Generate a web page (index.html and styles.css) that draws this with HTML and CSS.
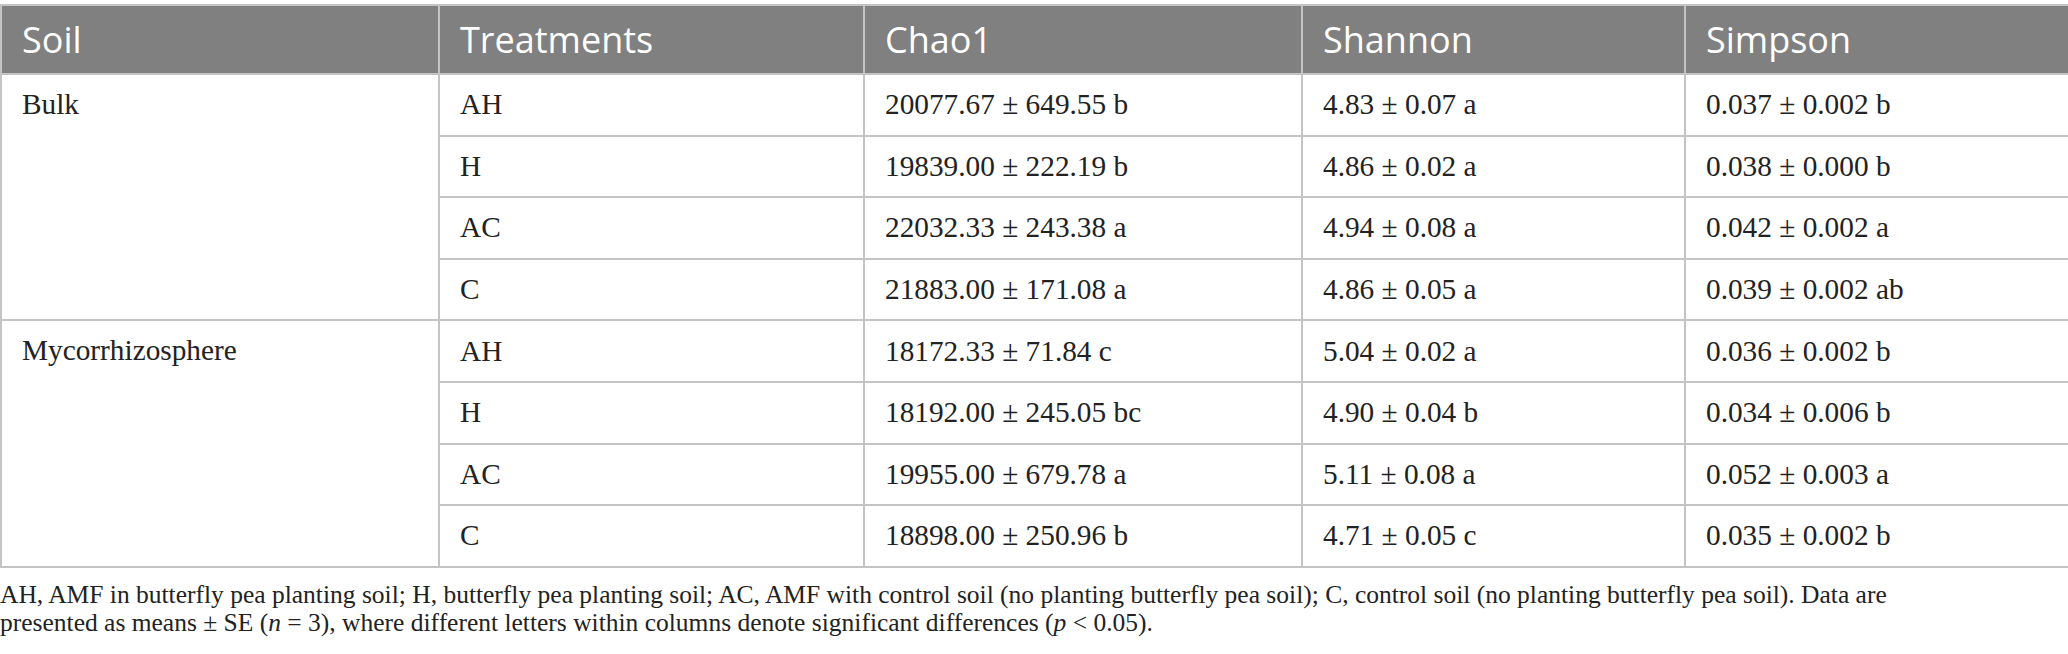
FILE: index.html
```html
<!DOCTYPE html>
<html lang="en">
<head>
    <meta charset="UTF-8">
    <title>Alpha diversity</title>
    <link rel="stylesheet" href="styles.css">
</head>
<body>
    <div class="wrap">
        <table class="data-table">
            <colgroup>
                <col class="c-soil">
                <col class="c-treat">
                <col class="c-chao">
                <col class="c-shannon">
                <col class="c-simpson">
            </colgroup>
            <thead>
                <tr>
                    <th>Soil</th>
                    <th>Treatments</th>
                    <th>Chao1</th>
                    <th>Shannon</th>
                    <th>Simpson</th>
                </tr>
            </thead>
            <tbody>
                <tr>
                    <td rowspan="4" class="group">Bulk</td>
                    <td>AH</td>
                    <td>20077.67 ± 649.55 b</td>
                    <td>4.83 ± 0.07 a</td>
                    <td>0.037 ± 0.002 b</td>
                </tr>
                <tr>
                    <td>H</td>
                    <td>19839.00 ± 222.19 b</td>
                    <td>4.86 ± 0.02 a</td>
                    <td>0.038 ± 0.000 b</td>
                </tr>
                <tr>
                    <td>AC</td>
                    <td>22032.33 ± 243.38 a</td>
                    <td>4.94 ± 0.08 a</td>
                    <td>0.042 ± 0.002 a</td>
                </tr>
                <tr>
                    <td>C</td>
                    <td>21883.00 ± 171.08 a</td>
                    <td>4.86 ± 0.05 a</td>
                    <td>0.039 ± 0.002 ab</td>
                </tr>
                <tr>
                    <td rowspan="4" class="group">Mycorrhizosphere</td>
                    <td>AH</td>
                    <td>18172.33 ± 71.84 c</td>
                    <td>5.04 ± 0.02 a</td>
                    <td>0.036 ± 0.002 b</td>
                </tr>
                <tr>
                    <td>H</td>
                    <td>18192.00 ± 245.05 bc</td>
                    <td>4.90 ± 0.04 b</td>
                    <td>0.034 ± 0.006 b</td>
                </tr>
                <tr>
                    <td>AC</td>
                    <td>19955.00 ± 679.78 a</td>
                    <td>5.11 ± 0.08 a</td>
                    <td>0.052 ± 0.003 a</td>
                </tr>
                <tr>
                    <td>C</td>
                    <td>18898.00 ± 250.96 b</td>
                    <td>4.71 ± 0.05 c</td>
                    <td>0.035 ± 0.002 b</td>
                </tr>
            </tbody>
        </table>
        <p class="note">AH, AMF in butterfly pea planting soil; H, butterfly pea planting soil; AC, AMF with control soil (no planting butterfly pea soil); C, control soil (no planting butterfly pea soil). Data are presented as means ± SE (<i>n</i> = 3), where different letters within columns denote significant differences (<i>p</i> &lt; 0.05).</p>
    </div>
</body>
</html>
```

FILE: styles.css
```css
body {
    margin: 0;
    background: #fff;
    font-family: "Liberation Serif", "Times New Roman", serif;
    color: #222;
}
.wrap {
    padding-top: 4px;
    width: 2068px;
}
.data-table {
    width: 2068px;
    border-collapse: collapse;
    table-layout: fixed;
    font-size: 29.3px;
}
.c-soil { width: 438px; }
.c-treat { width: 425px; }
.c-chao { width: 438px; }
.c-shannon { width: 383px; }
.c-simpson { width: 384px; }
.data-table th, .data-table td {
    border: 2px solid #c4c4c4;
    padding: 0 20px;
    text-align: left;
}
.data-table th {
    background-color: #808080;
    color: #fff;
    font-family: "Open Sans", "Noto Sans", sans-serif;
    font-weight: 400;
    font-size: 36px;
    height: 67px;
    vertical-align: middle;
}
.data-table td {
    height: 59.6px;
    vertical-align: middle;
}
.data-table td.group {
    vertical-align: top;
    padding-top: 13px;
}
.note {
    margin: 13px 0 0;
    max-width: 1920px;
    font-size: 25.5px;
    line-height: 28px;
    color: #222;
}
```
